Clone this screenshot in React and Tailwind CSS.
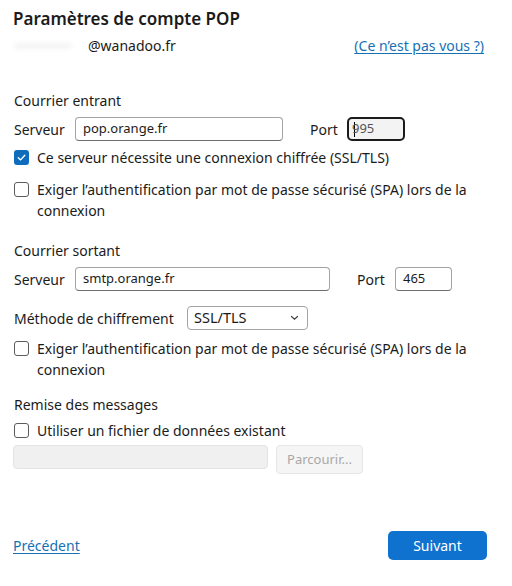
import React from 'react'

const font = { fontFamily: '"Noto Sans", "Open Sans", sans-serif' }

const Check = ({ checked }) => (
    <span className={`mt-[3px] flex h-[15px] w-[15px] shrink-0 items-center justify-center rounded-[3px] ${checked ? 'bg-[#0f6cbd]' : 'border border-[#5c5c5c] bg-white'}`}>
        {checked && (
            <svg width="11" height="11" viewBox="0 0 12 12" fill="none">
                <path d="M2.5 6.2 L5 8.6 L9.6 3.6" stroke="white" strokeWidth="1.5" strokeLinecap="round" strokeLinejoin="round" />
            </svg>
        )}
    </span>
)

const CheckRow = ({ checked, children, className = '' }) => (
    <div className={`flex items-start gap-[8px] leading-[21px] ${className}`}>
        <Check checked={checked} />
        <span>{children}</span>
    </div>
)

const TextBox = ({ value, className = '' }) => (
    <div className={`flex h-[24px] items-center rounded-[4px] border border-[#a3a3a3] border-b-[#6e6e6e] bg-white px-[7px] text-[13px] text-[#1b1b1b] ${className}`}>
        {value}
    </div>
)

export default function App() {
    return (
        <div className="h-[586px] w-[512px] overflow-hidden bg-white pl-[14px] pr-[28px] text-[14px] text-[#1b1b1b]" style={font}>
            <h1 className="mt-[5px] ml-[-1px] h-[28px] text-[17px] font-semibold leading-[28px] text-[#1b1b1b]">Paramètres de compte POP</h1>

            <div className="mt-[2px] flex h-[22px] items-center justify-between leading-[22px]">
                <div className="flex items-center">
                    <span className="h-[6px] w-[58px] rounded-full bg-[#f4f4f4] blur-[2px]"></span>
                    <span className="ml-[16px]">@wanadoo.fr</span>
                </div>
                <a href="#" className="text-[#1670b4] underline underline-offset-2">(Ce n’est pas vous ?)</a>
            </div>

            <div className="mt-[34px] h-[20px] leading-[20px]">Courrier entrant</div>
            <div className="mt-[6px] flex h-[24px] items-center">
                <span className="w-[61px]">Serveur</span>
                <TextBox value="pop.orange.fr" className="w-[208px]" />
                <span className="ml-[27px] w-[37px]">Port</span>
                <div className="flex h-[24px] w-[58px] items-center rounded-[5px] border-2 border-[#1b1b1b] bg-[#f3f3f3] px-[5px] text-[13px] text-[#555]">
                    <span className="mr-[-3px] h-[15px] w-px bg-black"></span>995
                </div>
            </div>

            <CheckRow checked className="mt-[6px]">Ce serveur nécessite une connexion chiffrée (SSL/TLS)</CheckRow>
            <CheckRow className="mt-[11px]">Exiger l’authentification par mot de passe sécurisé (SPA) lors de la connexion</CheckRow>

            <div className="mt-[20px] h-[20px] leading-[20px]">Courrier sortant</div>
            <div className="mt-[6px] flex h-[24px] items-center">
                <span className="w-[61px]">Serveur</span>
                <TextBox value="smtp.orange.fr" className="w-[255px]" />
                <span className="ml-[27px] w-[38px]">Port</span>
                <TextBox value="465" className="w-[57px]" />
            </div>

            <div className="mt-[15px] flex h-[24px] items-center">
                <span className="w-[173px]">Méthode de chiffrement</span>
                <div className="flex h-[24px] w-[121px] items-center justify-between rounded-[4px] border border-[#a3a3a3] bg-white pl-[6px] pr-[8px] text-[14.5px]">
                    <span>SSL/TLS</span>
                    <svg width="9" height="6" viewBox="0 0 9 6" fill="none">
                        <path d="M1.5 1.5 L4.5 4.3 L7.5 1.5" stroke="#444" strokeWidth="1.2" strokeLinecap="round" />
                    </svg>
                </div>
            </div>
            <CheckRow className="mt-[8px]">Exiger l’authentification par mot de passe sécurisé (SPA) lors de la connexion</CheckRow>

            <div className="mt-[15px] h-[20px] leading-[20px]">Remise des messages</div>
            <CheckRow className="mt-[5px]">Utiliser un fichier de données existant</CheckRow>
            <div className="mt-[4px] ml-[-1px] flex items-start gap-[8px]">
                <div className="h-[24px] w-[255px] rounded-[4px] border border-[#e3e3e3] bg-[#f0f0f0]"></div>
                <button className="h-[29px] w-[87px] rounded-[4px] border border-[#e6e6e6] bg-[#f5f5f5] text-[13px] text-[#a8a8a8]">Parcourir...</button>
            </div>

            <div className="mt-[57px] flex items-center justify-between">
                <a href="#" className="ml-[-1px] text-[14px] text-[#1670b4] underline underline-offset-2">Précédent</a>
                <button className="mr-[-3px] h-[29px] w-[99px] rounded-[5px] bg-[#0f72cf] text-[14px] text-white">Suivant</button>
            </div>
        </div>
    )
}
